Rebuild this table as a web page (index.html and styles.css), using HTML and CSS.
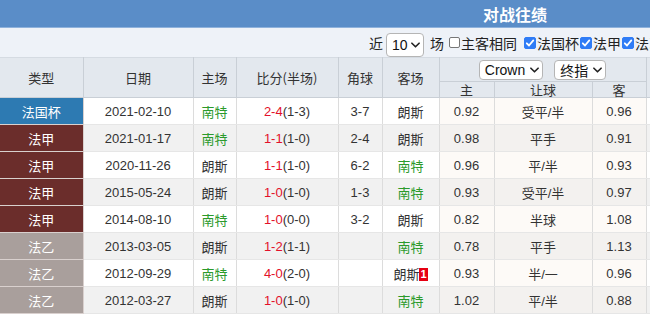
FILE: index.html
```html
<!DOCTYPE html>
<html>
<head>
<meta charset="utf-8">
<link rel="stylesheet" href="styles.css">
</head>
<body>
<div class="page">
  <div class="titlebar"><span class="title">对战往绩</span></div>
  <div class="controls">
    <span class="lbl">近</span>
    <span class="sel sel-num">10<svg class="chev" viewBox="0 0 10 6" width="9" height="6"><path d="M1 1 L5 5 L9 1" fill="none" stroke="#222" stroke-width="1.8" stroke-linecap="round" stroke-linejoin="round"/></svg></span>
    <span class="lbl">场</span>
    <span class="cb"></span><span class="lbl">主客相同</span>
    <span class="cb on gap"><svg viewBox="0 0 12 12" width="12" height="12"><path d="M2.8 6.3 L5 8.5 L9.3 3.4" fill="none" stroke="#fff" stroke-width="1.8" stroke-linecap="round" stroke-linejoin="round"/></svg></span><span class="lbl">法国杯</span>
    <span class="cb on"><svg viewBox="0 0 12 12" width="12" height="12"><path d="M2.8 6.3 L5 8.5 L9.3 3.4" fill="none" stroke="#fff" stroke-width="1.8" stroke-linecap="round" stroke-linejoin="round"/></svg></span><span class="lbl">法甲</span>
    <span class="cb on"><svg viewBox="0 0 12 12" width="12" height="12"><path d="M2.8 6.3 L5 8.5 L9.3 3.4" fill="none" stroke="#fff" stroke-width="1.8" stroke-linecap="round" stroke-linejoin="round"/></svg></span><span class="lbl">法乙</span>
  </div>
  <table class="grid">
    <colgroup>
      <col class="c-type"><col class="c-date"><col class="c-home"><col class="c-score"><col class="c-corner"><col class="c-away"><col class="c-o1"><col class="c-o2"><col class="c-o3"><col class="c-more">
    </colgroup>
    <thead>
      <tr class="h1">
        <th rowspan="2">类型</th>
        <th rowspan="2">日期</th>
        <th rowspan="2">主场</th>
        <th rowspan="2">比分(半场)</th>
        <th rowspan="2">角球</th>
        <th rowspan="2">客场</th>
        <th colspan="3" class="selcell">
          <span class="sel sel-co">Crown<svg class="chev" viewBox="0 0 10 6" width="9" height="6"><path d="M1 1 L5 5 L9 1" fill="none" stroke="#222" stroke-width="1.8" stroke-linecap="round" stroke-linejoin="round"/></svg></span>
          <span class="sel sel-co">终指<svg class="chev" viewBox="0 0 10 6" width="9" height="6"><path d="M1 1 L5 5 L9 1" fill="none" stroke="#222" stroke-width="1.8" stroke-linecap="round" stroke-linejoin="round"/></svg></span>
        </th>
        <th rowspan="2"></th>
      </tr>
      <tr class="h2">
        <th>主</th><th>让球</th><th>客</th>
      </tr>
    </thead>
    <tbody>
      <tr>
        <td class="t cup">法国杯</td><td>2021-02-10</td><td class="g">南特</td><td><span class="r">2-4</span>(1-3)</td><td>3-7</td><td>朗斯</td><td class="o">0.92</td><td class="o">受平/半</td><td class="o">0.96</td><td></td>
      </tr>
      <tr class="alt">
        <td class="t l1">法甲</td><td>2021-01-17</td><td class="g">南特</td><td><span class="r">1-1</span>(1-0)</td><td>2-4</td><td>朗斯</td><td class="o">0.98</td><td class="o">平手</td><td class="o">0.91</td><td></td>
      </tr>
      <tr>
        <td class="t l1">法甲</td><td>2020-11-26</td><td>朗斯</td><td><span class="r">1-1</span>(1-0)</td><td>6-2</td><td class="g">南特</td><td class="o">0.96</td><td class="o">平/半</td><td class="o">0.93</td><td></td>
      </tr>
      <tr class="alt">
        <td class="t l1">法甲</td><td>2015-05-24</td><td>朗斯</td><td><span class="r">1-0</span>(1-0)</td><td>1-3</td><td class="g">南特</td><td class="o">0.93</td><td class="o">受平/半</td><td class="o">0.97</td><td></td>
      </tr>
      <tr>
        <td class="t l1">法甲</td><td>2014-08-10</td><td class="g">南特</td><td><span class="r">1-0</span>(0-0)</td><td>3-2</td><td>朗斯</td><td class="o">0.82</td><td class="o">半球</td><td class="o">1.08</td><td></td>
      </tr>
      <tr class="alt">
        <td class="t l2">法乙</td><td>2013-03-05</td><td>朗斯</td><td><span class="r">1-2</span>(1-1)</td><td></td><td class="g">南特</td><td class="o">0.78</td><td class="o">平手</td><td class="o">1.13</td><td></td>
      </tr>
      <tr>
        <td class="t l2">法乙</td><td>2012-09-29</td><td class="g">南特</td><td><span class="r">4-0</span>(2-0)</td><td></td><td>朗斯<span class="badge">1</span></td><td class="o">0.93</td><td class="o">半/一</td><td class="o">0.96</td><td></td>
      </tr>
      <tr class="alt">
        <td class="t l2">法乙</td><td>2012-03-27</td><td>朗斯</td><td><span class="r">1-0</span>(1-0)</td><td></td><td class="g">南特</td><td class="o">1.02</td><td class="o">平/半</td><td class="o">0.88</td><td></td>
      </tr>
    </tbody>
  </table>
</div>
</body>
</html>
```

FILE: styles.css
```css
html, body {
  margin: 0;
  padding: 0;
  background: #fff;
  overflow: hidden;
}
body {
  font-family: "Liberation Sans", "Noto Sans CJK SC", sans-serif;
  color: #333;
  font-size: 13px;
}
.page {
  width: 760px;
}
.titlebar {
  height: 27px;
  background: #5a8dc8;
  border-bottom: 1px solid #8fb2dc;
  display: flex;
  align-items: center;
  padding-left: 483px;
}
.title {
  color: #fff;
  font-weight: bold;
  font-size: 16px;
  font-family: "Noto Sans CJK SC", sans-serif;
}
.controls {
  height: 29px;
  background: #eef2f8;
  display: flex;
  align-items: center;
  padding-left: 369px;
  white-space: nowrap;
  font-size: 14px;
  color: #222;
  font-family: "Noto Sans CJK SC", sans-serif;
}
.lbl {
  line-height: 16px;
}
.sel {
  display: inline-flex;
  align-items: center;
  justify-content: space-between;
  background: #fff;
  border: 1px solid #b5b5b5;
  border-radius: 4px;
  box-sizing: border-box;
  color: #111;
  font-family: "Liberation Sans", "Noto Sans CJK SC", sans-serif;
  font-size: 14px;
}
.sel-num {
  width: 38px;
  height: 24px;
  margin: 4px 6px 0 3px;
  padding: 0 3px 0 5px;
}
.sel-co {
  height: 20px;
  padding: 0 3px 0 5px;
  gap: 5px;
  vertical-align: middle;
}
.chev {
  display: block;
}
.cb {
  display: inline-block;
  width: 11px;
  height: 11px;
  box-sizing: border-box;
  border: 1px solid #777;
  border-radius: 2px;
  background: #fff;
  margin: 0 1px 0 5px;
}
.cb.on {
  background: #2f7cf6;
  border-color: #2f7cf6;
  width: 12px;
  height: 12px;
  margin: 0 1px 0 1px;
  position: relative;
}
.cb.on svg {
  position: absolute;
  left: -1px;
  top: -1px;
}
.cb.gap {
  margin-left: 7px;
}
.grid {
  border-collapse: collapse;
  table-layout: fixed;
  width: 720px;
}
.c-type { width: 83px; }
.c-date { width: 110px; }
.c-home { width: 43px; }
.c-score { width: 102px; }
.c-corner { width: 44px; }
.c-away { width: 57px; }
.c-o1 { width: 55px; }
.c-o2 { width: 98px; }
.c-o3 { width: 54px; }
.c-more { width: 74px; }
.grid th {
  background: #e3e8ee;
  font-weight: normal;
  color: #333;
  border: 1px solid #c9cfd6;
  padding: 0;
  font-family: "Noto Sans CJK SC", sans-serif;
  font-size: 13px;
}
.grid thead tr:first-child th {
  border-top-color: #d5dbe2;
}
.grid th:first-child {
  border-left: none;
}
.h1 th {
  height: 23px;
}
.h2 th {
  height: 15px;
  line-height: 15px;
}
.selcell {
  white-space: nowrap;
}
.selcell .sel + .sel {
  margin-left: 8px;
}
.grid td {
  height: 26px;
  padding: 0;
  text-align: center;
  border: 1px solid #dcdcdc;
  border-top-color: #e6e6e6;
  border-bottom-color: #e6e6e6;
  background: #fff;
  white-space: nowrap;
}
.grid td:first-child {
  border-left: none;
}
.grid tr.alt td {
  background: #f1f1f1;
}
.grid td.o {
  background: #fdfaf7;
}
.grid tr.alt td.o {
  background: #f3f1ef;
}
.grid td.t {
  color: #fff;
  border-color: #d9d0ce;
  font-family: "Noto Sans CJK SC", sans-serif;
}
.grid td.cup, .grid tr.alt td.cup { background: #2d7ab2; }
.grid td.l1, .grid tr.alt td.l1 { background: #6b2d2b; }
.grid td.l2, .grid tr.alt td.l2 { background: #a99f9c; }
.g {
  color: #2b9a2b;
}
.r {
  color: #e3102a;
}
.badge {
  display: inline-block;
  background: #e60012;
  color: #fff;
  font-weight: bold;
  font-size: 11px;
  line-height: 13px;
  padding: 0 1px;
  vertical-align: 1px;
}
```
